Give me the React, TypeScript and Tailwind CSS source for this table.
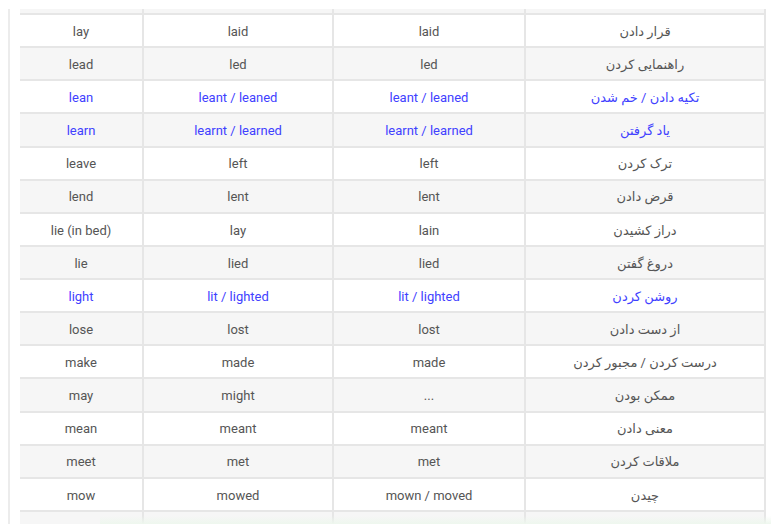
import React from "react";

type Row = { a: string; b: string; c: string; d: string; blue?: boolean };

const rows: Row[] = [
  { a: "lay", b: "laid", c: "laid", d: "قرار دادن" },
  { a: "lead", b: "led", c: "led", d: "راهنمایی کردن" },
  { a: "lean", b: "leant / leaned", c: "leant / leaned", d: "تکیه دادن / خم شدن", blue: true },
  { a: "learn", b: "learnt / learned", c: "learnt / learned", d: "یاد گرفتن", blue: true },
  { a: "leave", b: "left", c: "left", d: "ترک کردن" },
  { a: "lend", b: "lent", c: "lent", d: "قرض دادن" },
  { a: "lie (in bed)", b: "lay", c: "lain", d: "دراز کشیدن" },
  { a: "lie", b: "lied", c: "lied", d: "دروغ گفتن" },
  { a: "light", b: "lit / lighted", c: "lit / lighted", d: "روشن کردن", blue: true },
  { a: "lose", b: "lost", c: "lost", d: "از دست دادن" },
  { a: "make", b: "made", c: "made", d: "درست کردن / مجبور کردن" },
  { a: "may", b: "might", c: "...", d: "ممکن بودن" },
  { a: "mean", b: "meant", c: "meant", d: "معنی دادن" },
  { a: "meet", b: "met", c: "met", d: "ملاقات کردن" },
  { a: "mow", b: "mowed", c: "mown / moved", d: "چیدن" },
];

const cell = "border-2 border-[#e6e6e6] text-center align-middle p-0";

export default function App() {
  return (
    <div className="w-[771px] h-[531px] bg-white pt-[9px] overflow-hidden" style={{ fontFamily: "Roboto, 'DejaVu Sans', sans-serif" }}>
      <div className="ml-[8px] border-l-2 border-[#ececec] h-[515px] overflow-hidden relative">
        <table className="ml-[10px] w-[745px] border-collapse table-fixed text-[13px] text-[#555]">
          <colgroup>
            <col className="w-[123px]" />
            <col className="w-[190px]" />
            <col className="w-[192px]" />
            <col className="w-[240px]" />
          </colgroup>
          <tbody>
            <tr className="bg-[#f6f6f6] h-[5px]">
              <td className="border-b-2 border-r-2 border-[#e6e6e6] border-t-0 p-0"></td>
              <td className="border-b-2 border-r-2 border-[#e6e6e6] border-t-0 p-0"></td>
              <td className="border-b-2 border-r-2 border-[#e6e6e6] border-t-0 p-0"></td>
              <td className="border-b-2 border-r-2 border-[#e6e6e6] border-t-0 p-0"></td>
            </tr>
            {rows.map((r, i) => {
              const color = r.blue ? "text-[#4141ff]" : "text-[#555]";
              const bg = i % 2 === 0 ? "bg-white" : "bg-[#f6f6f6]";
              return (
                <tr key={i} className={`${bg} h-[33.14px]`}>
                  <td className={`${cell} pt-[2px] border-l-0 ${color}`}>{r.a}</td>
                  <td className={`${cell} pt-[2px] ${color}`}>{r.b}</td>
                  <td className={`${cell} pt-[2px] ${color}`}>{r.c}</td>
                  <td className={`${cell} pt-[2px] ${color} text-[13px]`} dir="rtl">{r.d}</td>
                </tr>
              );
            })}
            <tr className="bg-[#f6f6f6] h-[20px]">
              <td className={`${cell} border-l-0`}></td>
              <td className={cell}></td>
              <td className={cell}></td>
              <td className={cell}></td>
            </tr>
          </tbody>
        </table>
        <div className="absolute left-[90px] right-0 bottom-0 h-[8px] bg-gradient-to-b from-transparent to-[#eef7ee] pointer-events-none"></div>
      </div>
    </div>
  );
}
